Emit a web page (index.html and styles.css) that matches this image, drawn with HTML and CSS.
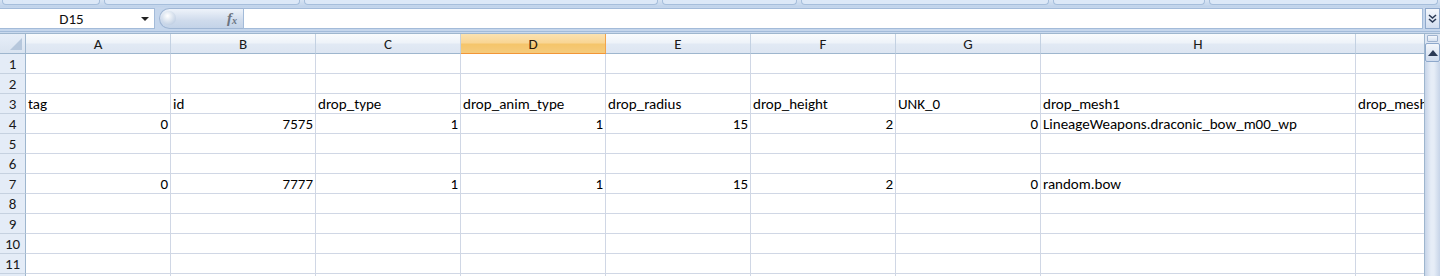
FILE: index.html
```html
<!DOCTYPE html>
<html>
<head>
<meta charset="utf-8">
<link rel="stylesheet" href="styles.css">
</head>
<body>
<div class="app">
  <div class="ribbon">
    <div class="grp" style="width:96px"></div>
    <div class="grp" style="width:194px"></div>
    <div class="grp" style="width:352px"></div>
    <div class="grp" style="width:133px"></div>
    <div class="grp" style="width:246px"></div>
    <div class="grp" style="width:150px"></div>
    <div class="grp grow"></div>
  </div>
  <div class="fbar">
    <div class="namebox"><span class="nb-text">D15</span><span class="nb-arrow"></span></div>
    <div class="fxbtn"><span class="fx-knob"></span><span class="fx">f<sub>x</sub></span></div>
    <div class="finput"></div>
    <div class="fexpand">
      <svg width="9" height="10" viewBox="0 0 9 10"><path d="M1 1 L4.5 4 L8 1 M1 5 L4.5 8 L8 5" fill="none" stroke="#2b3a55" stroke-width="1.6"/></svg>
    </div>
  </div>
  <div class="sheet">
    <div class="grid">
      <div class="corner"><span class="tri"></span></div>
      <div class="ch">A</div><div class="ch">B</div><div class="ch">C</div><div class="ch sel">D</div><div class="ch">E</div><div class="ch">F</div><div class="ch">G</div><div class="ch">H</div><div class="ch last"></div>

      <div class="rh">1</div><div class="c"></div><div class="c"></div><div class="c"></div><div class="c"></div><div class="c"></div><div class="c"></div><div class="c"></div><div class="c"></div><div class="c"></div>
      <div class="rh">2</div><div class="c"></div><div class="c"></div><div class="c"></div><div class="c"></div><div class="c"></div><div class="c"></div><div class="c"></div><div class="c"></div><div class="c"></div>
      <div class="rh">3</div><div class="c">tag</div><div class="c">id</div><div class="c">drop_type</div><div class="c">drop_anim_type</div><div class="c">drop_radius</div><div class="c">drop_height</div><div class="c">UNK_0</div><div class="c">drop_mesh1</div><div class="c clip">drop_mesh2</div>
      <div class="rh">4</div><div class="c n">0</div><div class="c n">7575</div><div class="c n">1</div><div class="c n">1</div><div class="c n">15</div><div class="c n">2</div><div class="c n">0</div><div class="c">LineageWeapons.draconic_bow_m00_wp</div><div class="c"></div>
      <div class="rh">5</div><div class="c"></div><div class="c"></div><div class="c"></div><div class="c"></div><div class="c"></div><div class="c"></div><div class="c"></div><div class="c"></div><div class="c"></div>
      <div class="rh">6</div><div class="c"></div><div class="c"></div><div class="c"></div><div class="c"></div><div class="c"></div><div class="c"></div><div class="c"></div><div class="c"></div><div class="c"></div>
      <div class="rh">7</div><div class="c n">0</div><div class="c n">7777</div><div class="c n">1</div><div class="c n">1</div><div class="c n">15</div><div class="c n">2</div><div class="c n">0</div><div class="c">random.bow</div><div class="c"></div>
      <div class="rh">8</div><div class="c"></div><div class="c"></div><div class="c"></div><div class="c"></div><div class="c"></div><div class="c"></div><div class="c"></div><div class="c"></div><div class="c"></div>
      <div class="rh">9</div><div class="c"></div><div class="c"></div><div class="c"></div><div class="c"></div><div class="c"></div><div class="c"></div><div class="c"></div><div class="c"></div><div class="c"></div>
      <div class="rh">10</div><div class="c"></div><div class="c"></div><div class="c"></div><div class="c"></div><div class="c"></div><div class="c"></div><div class="c"></div><div class="c"></div><div class="c"></div>
      <div class="rh">11</div><div class="c"></div><div class="c"></div><div class="c"></div><div class="c"></div><div class="c"></div><div class="c"></div><div class="c"></div><div class="c"></div><div class="c"></div>
      <div class="rh"></div><div class="c"></div><div class="c"></div><div class="c"></div><div class="c"></div><div class="c"></div><div class="c"></div><div class="c"></div><div class="c"></div><div class="c"></div>
    </div>
    <div class="vscroll">
      <div class="split"></div>
      <div class="upbtn"><svg width="10" height="6" viewBox="0 0 10 6"><path d="M0 6 L5 0 L10 6 Z" fill="#2b3a55"/></svg></div>
      <div class="track"></div>
    </div>
  </div>
</div>
</body>
</html>
```

FILE: styles.css
```css
html, body {
  margin: 0;
  padding: 0;
  width: 1440px;
  height: 276px;
  overflow: hidden;
  background: #c9d9ee;
  font-family: "Carlito", "Liberation Sans", Arial, sans-serif;
}
.app {
  display: flex;
  flex-direction: column;
  height: 276px;
}
.ribbon {
  height: 7px;
  flex: none;
  display: flex;
  gap: 4px;
  background: linear-gradient(#d6e3f3, #bfd2ea);
  padding: 0 2px;
  box-sizing: border-box;
}
.grp {
  height: 4px;
  background: #dce8f7;
  border: 1px solid #a6bedb;
  border-top: none;
  border-radius: 0 0 4px 4px;
}
.grp.grow { flex: 1; }
.fbar {
  height: 25px;
  flex: none;
  display: flex;
  align-items: stretch;
  padding: 1px 0 2px 0;
  box-sizing: border-box;
  background: #c5d6ec;
  border-bottom: 1px solid #a3bbd9;
}
.namebox {
  width: 155px;
  background: #fff;
  border: 1px solid #a3bbd9;
  border-left: none;
  display: flex;
  align-items: center;
  box-sizing: border-box;
}
.nb-text {
  flex: 1;
  text-align: center;
  font-size: 15px;
  color: #111;
  padding-left: 2px;
}
.nb-arrow {
  width: 0; height: 0;
  border-left: 4px solid transparent;
  border-right: 4px solid transparent;
  border-top: 4px solid #222;
  margin-right: 5px;
}
.fxbtn {
  width: 84px;
  margin-left: 4px;
  border-radius: 11px 0 0 11px;
  background: linear-gradient(#eef3fa, #cfdbec 60%, #c3d3e8);
  border: 1px solid #9fb6d4;
  border-right: none;
  box-sizing: border-box;
  display: flex;
  align-items: center;
  justify-content: flex-end;
  position: relative;
}
.fx-knob {
  position: absolute;
  left: 2px; top: 2px;
  width: 14px; height: 14px;
  border-radius: 50%;
  background: radial-gradient(circle at 40% 35%, #ffffff, #c6d4e6 70%, #a9bdd6);
}
.fx {
  font-family: "Liberation Serif", serif;
  font-style: italic;
  font-size: 15px;
  color: #6b7380;
  margin-right: 6px;
  font-weight: bold;
}
.fx sub { font-size: 10px; vertical-align: -1px; }
.finput {
  flex: 1;
  background: #fff;
  border: 1px solid #a3bbd9;
}
.fexpand {
  width: 15px;
  margin-left: 2px;
  background: linear-gradient(#f4f7fc, #d2def0);
  border: 1px solid #8ea8cb;
  box-sizing: border-box;
  display: flex;
  align-items: center;
  justify-content: center;
}
.sheet {
  flex: 1;
  display: flex;
  overflow: hidden;
  margin-top: 1px;
  border-top: 1px solid #9eb6ce;
}
.grid {
  width: 1424px;
  flex: none;
  display: grid;
  grid-template-columns: 26px repeat(7, 145px) 315px 68px;
  grid-auto-rows: 20px;
  background: #fff;
  overflow: hidden;
}
.corner {
  background: linear-gradient(#e7eef8, #d9e3f0);
  border-right: 1px solid #9eb6ce;
  border-bottom: 1px solid #9eb6ce;
  position: relative;
}
.tri {
  position: absolute;
  right: 3px; bottom: 3px;
  width: 0; height: 0;
  border-left: 12px solid transparent;
  border-bottom: 12px solid #b6c7dc;
}
.ch {
  background: linear-gradient(#f9fbfd 0%, #eef3f9 45%, #e1e9f4 55%, #dde6f2 100%);
  border-right: 1px solid #c3d1e2;
  border-bottom: 1px solid #9eb6ce;
  display: flex;
  align-items: center;
  justify-content: center;
  font-size: 15px;
  color: #1a1a1a;
}
.ch.sel {
  background: linear-gradient(#fbe2b1 0%, #f9d695 45%, #f5c56b 55%, #f5cb7c 100%);
  border-right-color: #f2a44b;
  border-bottom: 1px solid #f29536;
  color: #2a1a0a;
}
.ch.last { border-right: none; }
.rh {
  background: #e4ecf7;
  border-right: 1px solid #9eb6ce;
  border-bottom: 1px solid #c5d1e0;
  display: flex;
  align-items: center;
  justify-content: center;
  font-size: 15px;
  color: #1a1a1a;
}
.c {
  border-right: 1px solid #d0d7e5;
  border-bottom: 1px solid #d0d7e5;
  font-size: 15px;
  color: #000;
  padding: 0 2px;
  line-height: 19px;
  padding-top: 1px;
  white-space: nowrap;
  overflow: visible;
}
.c:nth-child(10n) { border-right: none; }
.c.n { text-align: right; }
.c.clip { overflow: hidden; }
.vscroll {
  flex: 1;
  display: flex;
  flex-direction: column;
  background: #dde6f3;
  border-left: 1px solid #9eb6ce;
}
.split {
  height: 5px;
  margin: 1px 2px;
  background: linear-gradient(#f5f8fc, #d6e1f0);
  border: 1px solid #9fb3cf;
  border-radius: 1px;
}
.upbtn {
  height: 17px;
  background: linear-gradient(#f3f6fb, #cfdcee);
  border: 1px solid #8ea8cb;
  border-radius: 2px;
  display: flex;
  align-items: center;
  justify-content: center;
}
.track {
  flex: 1;
  background: linear-gradient(90deg, #c6d4e8, #e6edf7 40%, #e6edf7 60%, #c6d4e8);
}
```
